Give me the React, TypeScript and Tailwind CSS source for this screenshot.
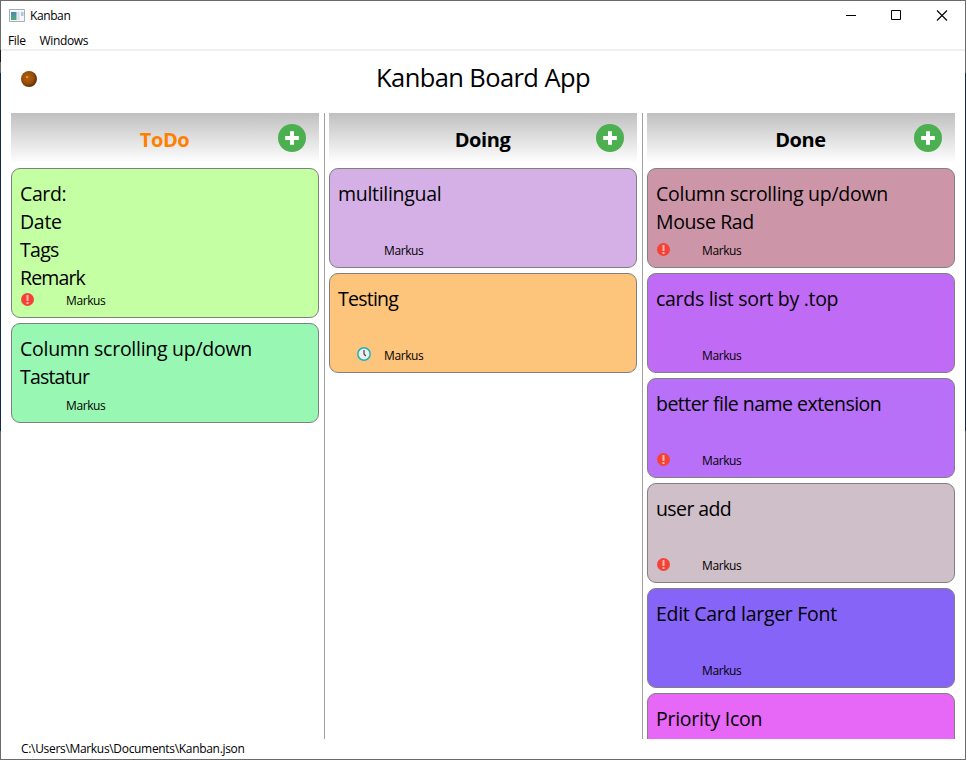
import React from "react";

type Line = { text: string; spacing: string };

type CardData = {
  lines: Line[];
  color: string;
  height?: string;
  alert?: boolean;
  clock?: boolean;
  owner?: string;
};

type ColumnData = { title: string; titleColor: string; cards: CardData[] };

const columns: ColumnData[] = [
  {
    title: "ToDo",
    titleColor: "text-[#ff8000]",
    cards: [
      {
        lines: [
          { text: "Card:", spacing: "tracking-[-0.4px]" },
          { text: "Date", spacing: "tracking-[-0.3px]" },
          { text: "Tags", spacing: "tracking-[-0.7px]" },
          { text: "Remark", spacing: "tracking-[-0.85px]" },
        ],
        color: "bg-[#c4ffa4]",
        height: "h-[150px]",
        alert: true,
        owner: "Markus",
      },
      {
        lines: [
          { text: "Column scrolling up/down", spacing: "tracking-[-0.27px]" },
          { text: "Tastatur", spacing: "tracking-[-0.8px]" },
        ],
        color: "bg-[#99f7b4]",
        owner: "Markus",
      },
    ],
  },
  {
    title: "Doing",
    titleColor: "text-black",
    cards: [
      { lines: [{ text: "multilingual", spacing: "tracking-[-0.3px]" }], color: "bg-[#d4b0e6]", owner: "Markus" },
      { lines: [{ text: "Testing", spacing: "tracking-[-0.75px]" }], color: "bg-[#fdc57b]", clock: true, owner: "Markus" },
    ],
  },
  {
    title: "Done",
    titleColor: "text-black",
    cards: [
      {
        lines: [
          { text: "Column scrolling up/down", spacing: "tracking-[-0.27px]" },
          { text: "Mouse Rad", spacing: "tracking-[-0.4px]" },
        ],
        color: "bg-[#cd96a8]",
        alert: true,
        owner: "Markus",
      },
      { lines: [{ text: "cards list sort by .top", spacing: "tracking-[-0.3px]" }], color: "bg-[#c06bf5]", owner: "Markus" },
      { lines: [{ text: "better file name extension", spacing: "tracking-[-0.53px]" }], color: "bg-[#b870f8]", alert: true, owner: "Markus" },
      { lines: [{ text: "user add", spacing: "tracking-[-0.6px]" }], color: "bg-[#cfbfc9]", alert: true, owner: "Markus" },
      { lines: [{ text: "Edit Card larger Font", spacing: "tracking-[-0.28px]" }], color: "bg-[#8664f8]", owner: "Markus" },
      { lines: [{ text: "Priority Icon", spacing: "tracking-[-0.25px]" }], color: "bg-[#e767f7]" },
    ],
  },
];

function AlertIcon() {
  return (
    <svg className="mt-px" width="13" height="13" viewBox="0 0 13 13">
      <circle cx="6.5" cy="6.5" r="6.5" fill="#f44336" />
      <path d="M5.5 2h2v6h-2zM5.5 9h2v2h-2z" fill="#ffb4b0" />
    </svg>
  );
}

function ClockIcon() {
  return (
    <svg width="14" height="14" viewBox="0 0 14 14">
      <circle cx="7" cy="7" r="6.2" fill="#eeeeee" stroke="#1fb0bf" strokeWidth="1.5" />
      <path d="M7 3v4l1.8 2" fill="none" stroke="#37474f" strokeWidth="1.2" />
    </svg>
  );
}

function PlusIcon() {
  return (
    <svg width="28" height="28" viewBox="0 0 28 28">
      <circle cx="14" cy="14" r="14" fill="#4caf50" />
      <path d="M12 7.3h4v4.7h4.8v4H16v4.8h-4V16H7.2v-4H12z" fill="#fff" />
    </svg>
  );
}

function Card({ card }: { card: CardData }) {
  return (
    <div
      className={`flex shrink-0 flex-col justify-between rounded-[9px] border border-[#808080] pt-[11px] pb-[7px] pl-2 ${card.color} ${card.height ?? "h-[100px]"}`}
    >
      <div className="text-[19.5px] leading-[28px]">
        {card.lines.map((line) => (
          <div key={line.text} className={`whitespace-nowrap ${line.spacing}`}>{line.text}</div>
        ))}
      </div>
      {card.owner && (
        <div className="-mt-2 flex h-[18px] shrink-0 items-start">
          <div className="w-[19px] pl-[1px]">{card.alert && <AlertIcon />}</div>
          <div className="w-[27px]">{card.clock && <ClockIcon />}</div>
          <div className="text-[12px] leading-[18px] tracking-[-0.4px]">{card.owner}</div>
        </div>
      )}
    </div>
  );
}

function Column({ column }: { column: ColumnData }) {
  return (
    <section className="flex w-[308px] shrink-0 flex-col gap-[5px] overflow-hidden">
      <header className="grid h-[50px] shrink-0 grid-cols-[40px_1fr_41px] bg-linear-to-b from-[#c0c0c0] to-white">
        <h2 className={`col-start-2 pt-[13px] text-center text-[20px] leading-[28px] font-bold tracking-[-0.4px] ${column.titleColor}`}>
          {column.title}
        </h2>
        <button className="mt-[11px] size-7">
          <PlusIcon />
        </button>
      </header>
      {column.cards.map((card) => (
        <Card key={card.lines[0].text} card={card} />
      ))}
    </section>
  );
}

function Divider() {
  return <div className="mr-[4px] ml-[5px] w-px bg-[#a0a0a0]" />;
}

function TitleBar() {
  return (
    <div className="flex h-[30px] shrink-0 items-center">
      <svg className="ml-2" width="16" height="14" viewBox="0 0 16 14">
        <defs>
          <linearGradient id="pane" x1="0" y1="0" x2="0" y2="1">
            <stop offset="0" stopColor="#4f86b8" />
            <stop offset="1" stopColor="#57a878" />
          </linearGradient>
        </defs>
        <path d="M.5.5h15v12H.5z" fill="#f4f6f8" stroke="#a9afb5" />
        <path d="M2 3h5.5v8H2z" fill="url(#pane)" />
        <path d="M8.5 3h2v8h-2z" fill="#d5dce4" />
        <path d="M12 3h2.5v4H12z" fill="#a8c9dc" />
      </svg>
      <span className="ml-[5px] text-[12px] leading-4 tracking-[-0.4px]">Kanban</span>
      <svg className="mr-[17px] ml-auto" width="102" height="12" viewBox="0 0 102 12" fill="none" stroke="#000">
        <path d="M0 5.5h10" />
        <path d="M45.5.5h9v9h-9z" />
        <path d="M91 .5l10 10M101 .5l-10 10" strokeWidth="1.1" />
      </svg>
    </div>
  );
}

export default function App() {
  return (
    <div className="flex h-[760px] w-[966px] overflow-hidden border-y border-[#6b6b6b] bg-white font-['Open_Sans','Noto_Sans',sans-serif] text-black">
      <div className="flex w-px shrink-0 flex-col bg-[#6b6b6b]">
        <div className="mt-[49px] h-[12px] bg-[#1c1c1c]" />
        <div className="mt-[11px] h-[358px] bg-[#14284a]" />
      </div>
      <div className="flex w-[964px] shrink-0 flex-col">
        <TitleBar />
        <nav className="flex h-[20px] shrink-0 gap-[14px] border-b-2 border-[#f0f0f0] pl-[7px] text-[12px] leading-[20px] tracking-[-0.35px]">
          <span>File</span>
          <span>Windows</span>
        </nav>
        <div className="grid h-[62px] shrink-0 grid-cols-[60px_1fr_60px]">
          <svg className="mt-[19px] ml-[19px]" width="18" height="18" viewBox="0 0 18 18">
            <defs>
              <radialGradient id="ball" cx="0.42" cy="0.42" r="0.65">
                <stop offset="0" stopColor="#b5620f" />
                <stop offset="0.55" stopColor="#9a4e08" />
                <stop offset="1" stopColor="#4a2604" />
              </radialGradient>
            </defs>
            <circle cx="9" cy="9" r="8" fill="url(#ball)" />
            <circle cx="7" cy="7" r="0.9" fill="#e8b080" />
          </svg>
          <h1 className="pt-[8px] text-center text-[25.5px] leading-[36px] tracking-[-0.6px]">Kanban Board App</h1>
        </div>
        <main className="flex h-[626px] shrink-0 pl-[10px]">
          <Column column={columns[0]} />
          <Divider />
          <Column column={columns[1]} />
          <Divider />
          <Column column={columns[2]} />
        </main>
        <footer className="pl-5 text-[12px] leading-[19px] tracking-[-0.32px]">C:\Users\Markus\Documents\Kanban.json</footer>
      </div>
      <div className="flex w-px shrink-0 flex-col bg-[#6b6b6b]">
        <div className="mt-[72px] h-[358px] bg-[#14284a]" />
      </div>
    </div>
  );
}
